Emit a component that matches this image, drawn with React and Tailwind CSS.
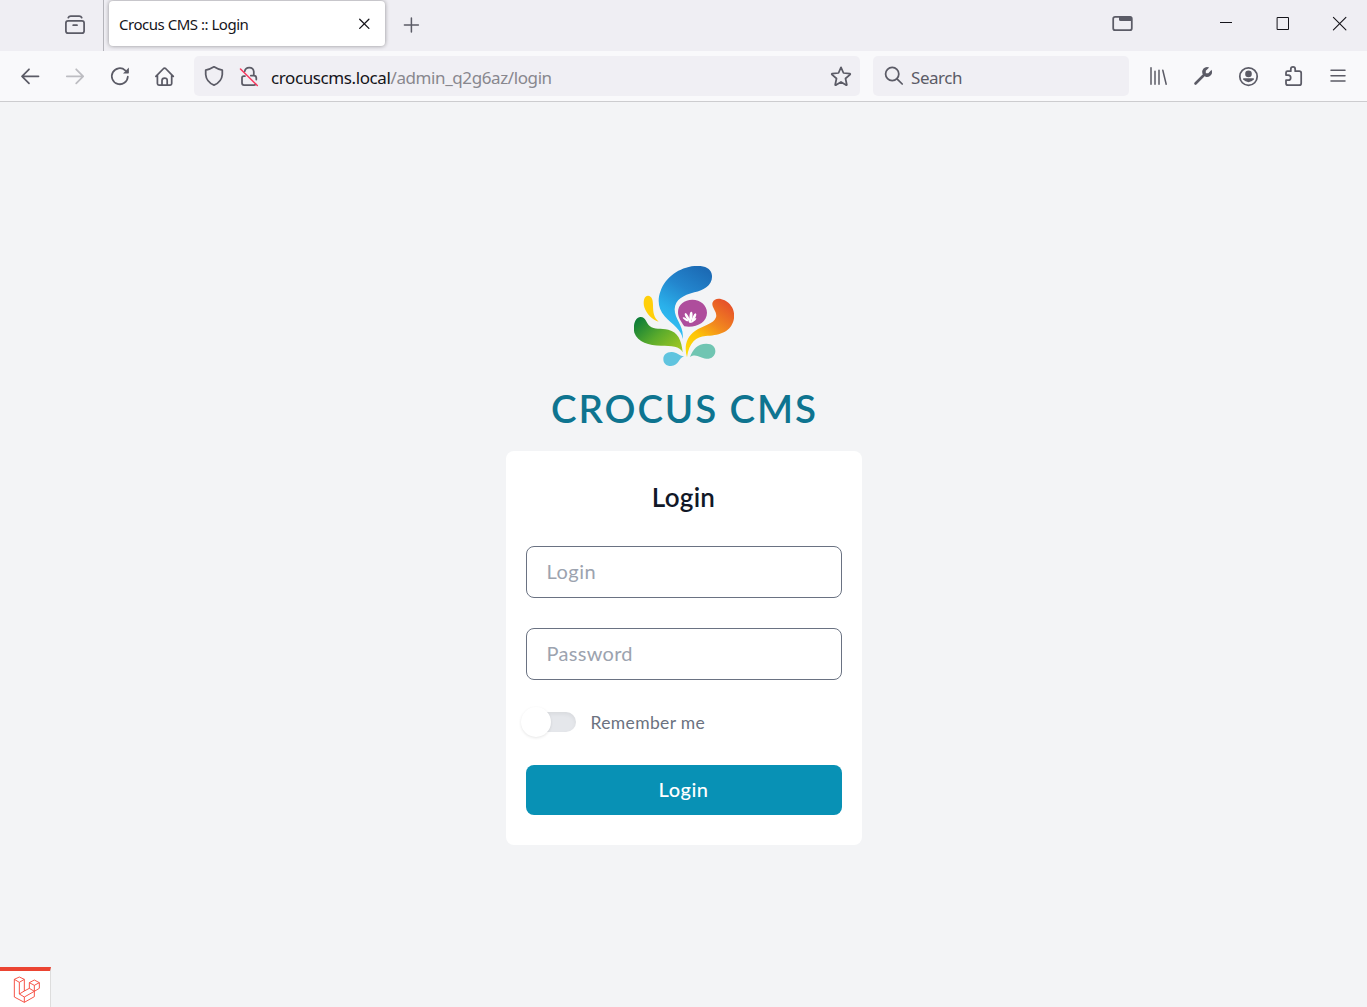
import React from 'react';

function Icon({ children, className = '' }) {
  return (
    <svg
      viewBox="0 0 24 24"
      className={`size-6 shrink-0 ${className}`}
      fill="none"
      stroke="currentColor"
      strokeWidth="1.75"
      strokeLinecap="round"
      strokeLinejoin="round"
    >
      {children}
    </svg>
  );
}

function TabBar() {
  return (
    <header className="flex h-[51px] shrink-0 bg-[#efeef3] text-[#5b5b66]">
      <div className="flex w-[104px] justify-end border-r border-[#b4b4ba] pr-4 pt-3">
        <Icon>
          <rect x="2.9" y="8.9" width="18.2" height="12.2" rx="2.2" />
          <path d="M5.3 5.7Q6 4.1 7.7 4.1H16.3Q18 4.1 18.7 5.7M10.2 13.2H14" />
        </Icon>
      </div>
      <div className="ml-[5px] mt-px flex h-[45px] w-[276px] items-center justify-between rounded-[4px] bg-white pl-2.5 pr-[9px] shadow-[0_0_4px_rgba(0,0,0,0.4)]">
        <span className="mt-0.5 whitespace-nowrap text-[15px] tracking-[-0.48px] text-[#15141a]">Crocus CMS :: Login</span>
        <Icon className="text-[#15141a]">
          <path strokeWidth="1.3" d="M7.7 7.2L16.9 16.4M16.9 7.2L7.7 16.4" />
        </Icon>
      </div>
      <Icon className="ml-3.5 mt-[13px]">
        <path strokeWidth="1.5" d="M5.4 12H19.4M12.4 5V19" />
      </Icon>
      <Icon className="ml-auto mt-3">
        <rect x="2.2" y="4.8" width="18.6" height="13.4" rx="2" />
        <path fill="currentColor" stroke="none" d="M8 4.5H19.5Q21 4.5 21 6V9H9.5Q8 9 8 7.5Z" />
      </Icon>
      <div className="ml-[79px] mr-[15px] mt-3 flex gap-[33px] text-[#15141a]">
        <Icon>
          <path strokeWidth="1" strokeLinecap="butt" d="M6 10.5H18" />
        </Icon>
        <Icon>
          <path strokeWidth="1" strokeLinejoin="miter" d="M6.5 5.5H17.5V17.5H6.5Z" />
        </Icon>
        <Icon>
          <path strokeWidth="1.1" d="M5.4 5.4L17.9 17.9M17.9 5.4L5.4 17.9" />
        </Icon>
      </div>
    </header>
  );
}

function Toolbar() {
  return (
    <nav className="flex h-[51px] shrink-0 border-b border-[#cccccf] bg-[#f9f9fb] text-[#5b5b66]">
      <div className="ml-[18px] mt-[13px] flex gap-[21px]">
        <Icon>
          <path d="M4 12.3H20.5M11 5.3L4 12.3L11 19.3" />
        </Icon>
        <Icon className="text-[#bdbdc2]">
          <path d="M3.8 12.3H20.2M13.2 5.3L20.2 12.3L13.2 19.3" />
        </Icon>
        <Icon>
          <path d="M19.8 12.7A8 8 0 1 1 17.2 6.3" />
          <path fill="currentColor" stroke="none" d="M20.9 3.5V8.7Q20.9 9.4 20.2 9.4H15Z" />
        </Icon>
        <Icon>
          <path d="M2.9 12.4L10.6 4.5Q11.6 3.6 12.6 4.5L20.3 12.4M4.4 11V19.6Q4.4 21.1 5.9 21.1H17.2Q18.7 21.1 18.7 19.6V11M9 21V16.5Q9 14 11.6 14T14.2 16.5V21" />
        </Icon>
      </div>
      <div className="ml-[17px] mt-[5px] flex h-10 w-[666px] items-center rounded-[5px] bg-[#f0eff4] px-[7px]">
        <Icon className="ml-px">
          <path d="M12 2.8Q16.2 5.4 20.3 6.2V10.5Q19.7 18 12 21.1Q4.3 18 3.7 10.5V6.2Q7.8 5.4 12 2.8Z" />
        </Icon>
        <Icon className="ml-[11px]">
          <path d="M7.7 7.4A4.6 4.6 0 0 1 16.8 7.6V11.2M8 12H6.8Q5 12 5 13.8V19Q5 21 7 21H17Q18 21 18.6 20.4M13.8 11.5H17Q19.3 11.5 19.3 14V15.6" />
          <path stroke="#f9375e" strokeWidth="1.5" d="M3.5 5L20.3 21.5" />
        </Icon>
        <span className="ml-2.5 mt-[3px] whitespace-nowrap text-[17px] tracking-[-0.4px] text-[#15141a]">
          crocuscms.local<span className="text-[#88878e]">/admin_q2g6az/login</span>
        </span>
        <Icon className="ml-auto">
          <path d="M12 3.4L14.5 9L20.8 9.6Q21.6 9.9 21 10.6L16.5 14.5L17.8 20.7Q17.8 21.5 17 21.1L12 18L7 21.1Q6.2 21.5 6.2 20.7L7.5 14.5L3 10.6Q2.4 9.9 3.2 9.6L9.5 9Z" />
        </Icon>
      </div>
      <div className="ml-[13px] mt-[5px] flex h-10 w-64 items-center rounded-[5px] bg-[#f0eff4] pl-[9px]">
        <Icon>
          <circle cx="10.2" cy="10" r="6.6" />
          <path d="M15 14.8L20.2 20" />
        </Icon>
        <span className="ml-[5px] mt-[3px] text-[17px] tracking-[-0.45px]">Search</span>
      </div>
      <div className="ml-[17px] mt-[13px] flex gap-[21px]">
        <Icon>
          <path strokeWidth="1.5" d="M5 3.8V20.3M9 7.3V20.3M13 6.3V20.3M16.8 6.3L20.2 20.3" />
        </Icon>
        <Icon>
          <path strokeWidth="2.6" d="M4.5 19.5L13.5 10.5" />
          <path fill="currentColor" stroke="none" d="M18.2 3.5L14.8 6.7V9.2H17.3L20.6 5.8Q22 10 19 12.1Q17.3 13.4 14.5 12.8L11.3 9.6Q10.6 6.8 12.3 4.8Q14.7 2.2 18.2 3.5Z" />
        </Icon>
        <Icon>
          <circle cx="12.5" cy="12.6" r="8.7" />
          <g fill="currentColor" stroke="none">
            <circle cx="12.5" cy="9.9" r="3.3" />
            <path d="M7.8 14.2H17.2Q18.4 14.2 17.8 15.3Q16 18.2 12.5 18.2T7.2 15.3Q6.6 14.2 7.8 14.2Z" />
          </g>
        </Icon>
        <Icon>
          <path d="M5 11.1V8.7Q5 7.2 6.5 7.2H9.8V5.2Q9.8 2.9 12 2.9T14.2 5.2V7.2H18.2Q20.2 7.2 20.2 9.2V19.2Q20.2 21.2 18.2 21.2H7Q5 21.2 5 19.2V16.2H7.2Q9.7 16.2 9.7 13.7T7.2 11.1Z" />
        </Icon>
        <Icon>
          <path strokeWidth="1.5" d="M5 6.3H19M5 11.7H19M5 17H19" />
        </Icon>
      </div>
    </nav>
  );
}

function CrocusLogo() {
  return (
    <svg viewBox="30 30 300 300" className="size-[100px]">
      <defs>
        <linearGradient id="blue" x1="0.75" y1="0" x2="0.3" y2="1">
          <stop offset="0" stopColor="#1c6bb5" />
          <stop offset="0.35" stopColor="#2385cd" />
          <stop offset="0.7" stopColor="#2ab0ea" />
          <stop offset="1" stopColor="#36c3f5" />
        </linearGradient>
        <linearGradient id="green" x1="0" y1="0.1" x2="1" y2="0.9">
          <stop offset="0" stopColor="#087a38" />
          <stop offset="0.5" stopColor="#5aab2c" />
          <stop offset="1" stopColor="#a5c923" />
        </linearGradient>
        <linearGradient id="orange" x1="0.8" y1="0" x2="0.2" y2="1">
          <stop offset="0" stopColor="#e54e2b" />
          <stop offset="0.42" stopColor="#f28a1e" />
          <stop offset="0.7" stopColor="#fdc407" />
          <stop offset="1" stopColor="#ffdc08" />
        </linearGradient>
      </defs>
      <path fill="url(#blue)" d="M176 249C174 222 144 205 122 181C103 160 99 132 110 104C125 64 166 34 211 30C242 27 263 38 264 59C266 87 240 102 211 109C177 118 154 131 152 159C151 190 181 209 176 249Z" />
      <path fill="#ffcf0a" d="M104 197C84 192 68 174 61 154C56 136 61 119 72 119C84 120 87 132 87 148C87 171 90 185 104 197Z" />
      <path fill="url(#green)" d="M176 289C168 270 142 270 111 269C75 269 41 258 31 230C26 204 35 184 49 183C65 182 66 200 77 210C91 222 111 216 133 221C161 228 173 252 176 289Z" />
      <path fill="url(#orange)" d="M189 304C180 273 186 244 213 225C237 209 270 204 276 184C281 167 260 153 266 139C271 126 287 125 302 133C328 147 335 173 328 196C317 231 281 239 245 240C217 242 195 259 189 304Z" />
      <path fill="#ae4d9c" d="M181 211C170 195 162 184 162 168C162 146 181 131 205 131C230 131 249 148 249 170C249 199 216 217 181 211Z" />
      <g fill="white">
        <ellipse cx="189" cy="182" rx="4" ry="12" transform="rotate(-28 189 182)" />
        <ellipse cx="201" cy="180" rx="4.5" ry="13" transform="rotate(5 201 180)" />
        <ellipse cx="210" cy="184" rx="4" ry="13" transform="rotate(25 210 184)" />
        <ellipse cx="185" cy="190" rx="3" ry="10" transform="rotate(-58 185 190)" />
        <ellipse cx="209" cy="193" rx="3" ry="10" transform="rotate(50 209 193)" />
        <ellipse cx="198" cy="194" rx="4.5" ry="7" transform="rotate(-10 198 194)" />
      </g>
      <path fill="#60c4df" d="M180 301C163 307 165 329 141 330C126 330 118 322 118 309C118 297 127 288 142 288C159 287 164 300 180 301Z" />
      <path fill="#70c5b2" d="M198 303C207 280 220 263 247 263C265 263 275 273 274 287C273 300 262 309 247 308C228 308 218 291 198 303Z" />
    </svg>
  );
}

function LoginCard() {
  return (
    <form className="mt-[23px] flex h-[394px] w-[356px] flex-col rounded-lg bg-white px-5" onSubmit={(e) => e.preventDefault()}>
      <h2 className="mt-[30px] text-center text-[26px] font-semibold leading-8 tracking-[0.3px] text-[#111827]">Login</h2>
      <input className="mt-[33px] h-[52px] w-full rounded-lg border border-gray-500 px-5 pb-0.5 text-xl tracking-[0.5px] outline-none placeholder:text-[#9ca3af]" placeholder="Login" />
      <input className="mt-[30px] h-[52px] w-full rounded-lg border border-gray-500 px-5 pb-0.5 text-xl tracking-[0.3px] outline-none placeholder:text-[#9ca3af]" placeholder="Password" type="password" />
      <label className="mt-[27px] flex h-[30px] items-center text-[17.5px] tracking-[0.35px] text-[#6b7280]">
        <span className="flex h-5 w-[50px] items-center rounded-full bg-[#e5e7eb] shadow-[inset_0_2px_4px_rgba(0,0,0,0.06)]">
          <span className="-ml-[5px] size-[30px] rounded-full bg-white shadow-[0_1px_3px_rgba(0,0,0,0.1)]" />
        </span>
        <span className="ml-[15px] mt-0.5 whitespace-nowrap">Remember me</span>
      </label>
      <button className="mt-[28px] h-[50px] rounded-lg bg-[#0891b5] pb-0.5 text-xl font-medium tracking-[0.5px] text-white">Login</button>
    </form>
  );
}

function DebugBadge() {
  return (
    <div className="absolute bottom-0 left-0 h-10 w-[51px] border-r border-t-4 border-r-[#dddddd] border-t-[#eb4432] bg-white pl-[13px] pt-[5px]">
      <svg viewBox="0 0 81 81" className="size-[27px]" fill="none" stroke="#f5483b" strokeWidth="2.8" strokeLinejoin="round">
        <path d="M4 10L19 3L34 10L19 19ZM4 10V63L34 79L64 62V46L34 63V79M19 19V54L34 63M34 10V45L19 54M34 45L49 37V20L64 12L79 20V37L64 46L49 37M49 20L64 28L79 20M64 28V46" />
      </svg>
    </div>
  );
}

export default function App() {
  return (
    <div className="flex h-[1007px] w-full flex-col overflow-hidden bg-[#f3f4f6] font-['Noto_Sans',sans-serif]">
      <TabBar />
      <Toolbar />
      <main className="relative flex flex-1 flex-col items-center pt-[164px] font-['Lato',sans-serif]">
        <div className="ml-px">
          <CrocusLogo />
        </div>
        <h1 className="mt-[22px] whitespace-nowrap pl-0.5 text-[38.5px] font-semibold leading-10 tracking-[1.9px] text-[#0e7490]">CROCUS CMS</h1>
        <LoginCard />
        <DebugBadge />
      </main>
    </div>
  );
}
